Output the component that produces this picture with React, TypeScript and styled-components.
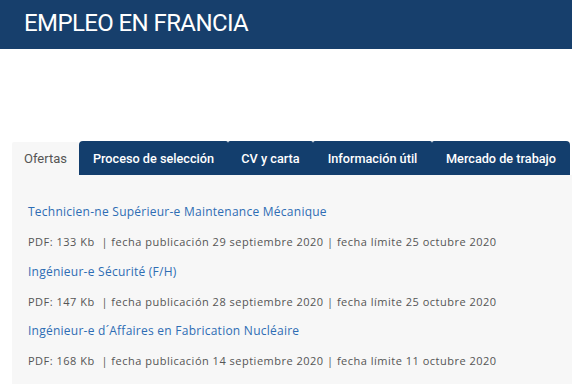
import * as React from 'react';
import styled, { createGlobalStyle, css } from 'styled-components';

const GlobalStyle = createGlobalStyle`
  html, body {
    margin: 0;
    padding: 0;
    background: #ffffff;
  }
  body {
    width: 572px;
    height: 384px;
    overflow: hidden;
  }
`;

const Page = styled.div`
  width: 572px;
  height: 384px;
  display: flex;
  flex-direction: column;
`;

const Header = styled.header`
  height: 49px;
  background: #173f6c;
  display: flex;
  align-items: center;
  padding-left: 24px;
  box-sizing: border-box;
`;

const Title = styled.h1`
  margin: 0;
  font-family: Roboto, 'Liberation Sans', sans-serif;
  font-weight: 400;
  font-size: 24px;
  color: #ffffff;
  letter-spacing: -0.6px;
  padding-bottom: 3px;
`;

const Section = styled.section`
  margin-top: 92px;
  margin-left: 12px;
  display: flex;
  flex-direction: column;
  flex: 1;
`;

const TabList = styled.nav`
  display: flex;
  height: 34px;
`;

const Tab = styled.div<{ active?: boolean; width: number }>`
  width: ${({ width }) => width}px;
  box-sizing: border-box;
  display: flex;
  align-items: center;
  justify-content: center;
  font-family: Roboto, 'Liberation Sans', sans-serif;
  font-size: 13px;
  border-radius: 2px 2px 0 0;
  ${({ active }) =>
    active
      ? css`
          background: #f7f7f7;
          color: #555555;
          margin-top: 1px;
        `
      : css`
          background: #133e6d;
          color: #ffffff;
          font-weight: 500;
          font-size: 12.7px;
        `}
  &:nth-child(2) {
    border-top-left-radius: 4px;
  }
  &:last-child {
    border-top-right-radius: 4px;
  }
`;

const Panel = styled.div`
  flex: 1;
  background: #f7f7f7;
  padding: 29px 16px 0 16px;
  display: flex;
  flex-direction: column;
`;

const Offer = styled.div`
  display: flex;
  flex-direction: column;
`;

const OfferLink = styled.a`
  font-family: 'Open Sans', 'Noto Sans', sans-serif;
  font-size: 12px;
  line-height: 16px;
  letter-spacing: 0.25px;
  color: #2e6db4;
  text-decoration: none;
  height: 30px;
`;

const Meta = styled.div`
  font-family: 'Open Sans', 'Noto Sans', sans-serif;
  font-size: 11px;
  line-height: 16px;
  letter-spacing: 0.5px;
  color: #555555;
  height: 29.5px;
  white-space: pre;
`;

const tabs = [
  { label: 'Ofertas', width: 67 },
  { label: 'Proceso de selección', width: 149 },
  { label: 'CV y carta', width: 85 },
  { label: 'Información útil', width: 119 },
  { label: 'Mercado de trabajo', width: 138 },
];

const offers = [
  {
    title: 'Technicien-ne Supérieur-e Maintenance Mécanique',
    size: '133 Kb',
    published: '29 septiembre 2020',
    deadline: '25 octubre 2020',
  },
  {
    title: 'Ingénieur-e Sécurité (F/H)',
    size: '147 Kb',
    published: '28 septiembre 2020',
    deadline: '25 octubre 2020',
  },
  {
    title: 'Ingénieur-e d´Affaires en Fabrication Nucléaire',
    size: '168 Kb',
    published: '14 septiembre 2020',
    deadline: '11 octubre 2020',
  },
];

export default function App() {
  const [activeTab, setActiveTab] = React.useState(0);
  return (
    <Page>
      <GlobalStyle />
      <Header>
        <Title>EMPLEO EN FRANCIA</Title>
      </Header>
      <Section>
        <TabList>
          {tabs.map((tab, i) => (
            <Tab key={tab.label} width={tab.width} active={i === activeTab} onClick={() => setActiveTab(i)}>
              {tab.label}
            </Tab>
          ))}
        </TabList>
        <Panel>
          {offers.map((offer) => (
            <Offer key={offer.title}>
              <OfferLink href="#">{offer.title}</OfferLink>
              <Meta>
                {`PDF: ${offer.size}  | fecha publicación ${offer.published} | fecha límite ${offer.deadline}`}
              </Meta>
            </Offer>
          ))}
        </Panel>
      </Section>
    </Page>
  );
}
